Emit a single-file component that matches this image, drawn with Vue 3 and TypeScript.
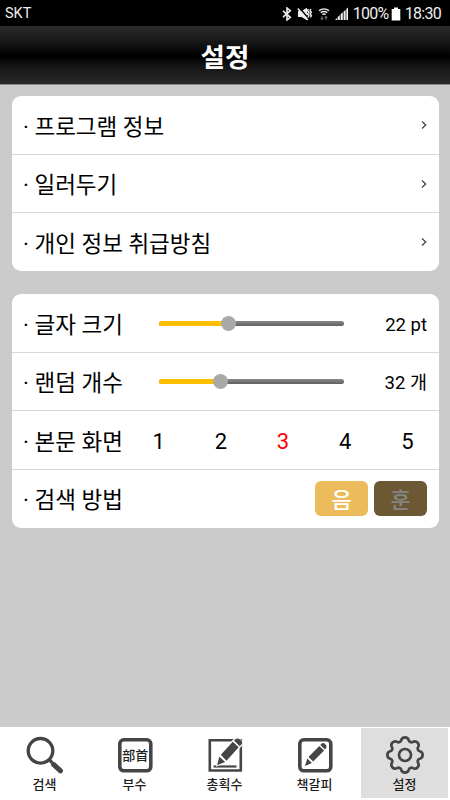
<script setup lang="ts">
import { ref } from 'vue'

interface Slider {
  label: string
  percent: number
  value: string
}

const links: string[] = ['프로그램 정보', '일러두기', '개인 정보 취급방침']
const sliders: Slider[] = [
  { label: '글자 크기', percent: 37.4, value: '22 pt' },
  { label: '랜덤 개수', percent: 33.4, value: '32 개' },
]
const screens: number[] = [1, 2, 3, 4, 5]
const selectedScreen = ref(3)
const tabs: string[] = ['검색', '부수', '총획수', '책갈피', '설정']
const activeTab = ref('설정')

// Eight rounded lobes joined by small concave notches.
function gearOutline(): string {
  const point = (radius: number, degrees: number): string => {
    const a = ((degrees - 90) * Math.PI) / 180
    return `${(20 + radius * Math.cos(a)).toFixed(2)} ${(20 + radius * Math.sin(a)).toFixed(2)}`
  }
  let d = `M${point(15.3, -14)}`
  for (let i = 0; i < 8; i++) {
    const c = i * 45
    d += `A3.85 3.85 0 0 1 ${point(15.3, c + 14)}`
    d += `A2.8 2.8 0 0 0 ${point(15.3, c + 31)}`
  }
  return d + 'Z'
}
const gearPath = gearOutline()
</script>

<template>
  <div class="screen">
    <div class="status">
      <span class="carrier">SKT</span>
      <div class="status-right">
        <svg class="bt" width="10" height="14" viewBox="0 0 10 14"><path d="M1 3.8 8.3 10.3 5 13V1l3.3 2.7L1 10.2" /></svg>
        <svg class="mute" width="16" height="14" viewBox="0 0 16 14">
          <path class="fill" d="M1 4h3.500L10 .8v12.400L4.500 10H1z" />
          <path class="cut" d="M2.200 .6 12 12" />
          <path d="M.8 1.500 10.800 13M11.500 2l-1 1.600 1.400 1.700-1.400 1.700 1.400 1.700-1 1.800M14 2l-1 1.600 1.400 1.700L13 7l1.400 1.700L13.400 10.500" />
        </svg>
        <svg class="wifi" width="12" height="14" viewBox="0 0 12 14">
          <path d="M1 3.600Q6 .2 11 3.600M2.700 5.600Q6 3.400 9.300 5.600M4.300 7.500Q6 6.400 7.700 7.500" />
          <path class="dim" d="M4 9v3.500M2.700 11.200 4 12.700l1.300-1.500M8 13V9.500M6.700 10.800 8 9.300l1.300 1.500" />
        </svg>
        <svg class="signal" width="15" height="14" viewBox="0 0 15 14"><path d="M1 13h2v-2zM3.600 13h2.200V8L3.600 10.200zM6.600 13h2.200V5.200L6.600 7.200zM9.600 13h2V2.900L9.600 4.600zM12.300 13H14V.5l-1.700 1.400z" /></svg>
        <span class="battery-text">100%</span>
        <svg class="battery" width="10" height="14" viewBox="0 0 10 14"><path d="M3 .5h4V2h2.300v11.500H.7V2H3z" /></svg>
        <span class="clock">18:30</span>
      </div>
    </div>

    <header class="header"><h1>설정</h1></header>

    <main class="content">
      <section class="card">
        <div v-for="link in links" :key="link" class="row">
          <span class="label">· {{ link }}</span>
          <svg class="chevron" width="6" height="10" viewBox="0 0 6 10"><path d="M1 1.500 4.700 5 1 8.500" /></svg>
        </div>
      </section>

      <section class="card">
        <div v-for="s in sliders" :key="s.label" class="row">
          <span class="label fixed">· {{ s.label }}</span>
          <div class="track">
            <div class="filled" :style="{ width: s.percent + '%' }"></div>
            <div class="thumb" :style="{ left: s.percent + '%' }"></div>
          </div>
          <span class="value">{{ s.value }}</span>
        </div>
        <div class="row">
          <span class="label fixed">· 본문 화면</span>
          <div class="numbers">
            <span v-for="n in screens" :key="n" :class="{ selected: n === selectedScreen }" @click="selectedScreen = n">{{ n }}</span>
          </div>
        </div>
        <div class="row">
          <span class="label">· 검색 방법</span>
          <div class="toggles">
            <button class="toggle on">음</button>
            <button class="toggle off">훈</button>
          </div>
        </div>
      </section>
    </main>

    <nav class="tabs">
      <div v-for="(tab, i) in tabs" :key="tab" class="tab" :class="{ active: tab === activeTab }" @click="activeTab = tab">
        <svg class="icon" width="40" height="40" viewBox="0 0 40 40">
          <g v-if="i === 0">
            <circle class="line" cx="15.500" cy="15.800" r="12.300" />
            <path class="line" d="m24 24.500 3 3" />
            <path class="handle" d="m28.500 29.300 7 6.500" />
          </g>
          <g v-else-if="i === 1">
            <rect class="line frame" x="4.800" y="4.800" width="31" height="31" rx="4" />
            <text x="20.300" y="25" text-anchor="middle">部首</text>
          </g>
          <g v-else-if="i === 2">
            <path class="line sharp" d="M4.800 5.300H35.800V35.500H4.800z" />
            <path class="handle thin" d="M8.500 31.500H31.500" />
            <path class="halo" d="m14 22.500 15-17.500q3.500-2.500 6 0t1 5.500L21 26.500l-8.500 3.500z" />
            <path class="solid" d="m14.300 21.500 5.800 5.500-8 3.300zM15.800 19.800 27.800 6.800l5.900 5.500L21.500 25.700zM29 5.600l1.700-1.600q2-1.500 4.700.8t1.200 4.400L34.800 11.200z" />
          </g>
          <g v-else-if="i === 3">
            <rect class="line frame" x="4.800" y="4.800" width="31" height="31" rx="4" />
            <path class="solid" d="m12.300 23.500 4.600 4.400-6.900 3.100zM13.500 22 24.300 10.900l4.800 4.600-10.900 11zM25.300 9.900l1.500-1.400q1.500-1.200 3.500.7t.8 3.500l-1.100 1.700z" />
          </g>
          <g v-else>
            <path class="line gear" :d="gearPath" />
            <circle class="line gear" cx="20" cy="20" r="6" />
          </g>
        </svg>
        <span class="tab-label">{{ tab }}</span>
      </div>
    </nav>
  </div>
</template>

<style>
body {
  margin: 0;
}
</style>

<style scoped>
.screen {
  width: 450px;
  height: 800px;
  display: flex;
  flex-direction: column;
  background: #cbcbcb;
  color: #000;
  font-family: Roboto, "Noto Sans CJK KR", sans-serif;
  overflow: hidden;
}
.status {
  height: 26px;
  flex: none;
  box-sizing: border-box;
  padding: 1px 9px 0 5px;
  display: flex;
  justify-content: space-between;
  align-items: center;
  background: #000;
  color: #eee;
  font-size: 14.500px;
}
.status-right {
  display: flex;
  align-items: center;
  font-size: 16px;
}
.status svg {
  fill: none;
  stroke: #eee;
  stroke-width: 1.4;
}
.status .bt {
  stroke-width: 1.6;
}
.status .mute {
  margin-left: 5px;
}
.status .mute .fill {
  fill: #eee;
  stroke: none;
}
.status .mute .cut {
  stroke: #000;
  stroke-width: 1.500;
}
.status .wifi {
  margin-left: 5px;
}
.status .wifi .dim {
  stroke: #666;
  stroke-width: 1.2;
}
.status .signal {
  margin-left: 4px;
  fill: #eee;
  stroke: none;
}
.battery-text {
  width: 37px;
  margin-left: 4px;
  letter-spacing: -0.700px;
  white-space: nowrap;
}
.status .battery {
  margin-left: 1px;
  margin-right: 1px;
  fill: #fff;
  stroke: none;
}
.clock {
  margin-left: 3px;
  letter-spacing: -0.700px;
}
.header {
  height: 59px;
  flex: none;
  box-sizing: border-box;
  border-bottom: 1px solid #888;
  display: flex;
  align-items: center;
  justify-content: center;
  background: linear-gradient(#2d2d2d 0%, #161616 28%, #000 52%, #151515 70%, #2a2a2a 100%);
}
h1 {
  margin: 0;
  padding-top: 5px;
  color: #fff;
  font-size: 26.500px;
  line-height: 38px;
  font-weight: 700;
}
.content {
  flex: 1;
  padding: 11.300px 11.500px 0;
  display: flex;
  flex-direction: column;
  gap: 23px;
}
.card {
  background: #fff;
  border-radius: 9px;
}
.row {
  height: 58.400px;
  box-sizing: border-box;
  padding: 0 11.500px;
  display: flex;
  align-items: center;
  border-bottom: 1px solid #d8d8d8;
}
.row:first-child {
  height: 58.600px;
}
.row:last-child {
  height: 58.100px;
  border-bottom: 0;
}
.label {
  flex: 1;
  padding-top: 3px;
  font-size: 22.500px;
  line-height: 32px;
  white-space: pre;
}
.label.fixed {
  flex: none;
  width: 136px;
}
.chevron {
  fill: none;
  stroke: #444;
  stroke-width: 1.300;
}
.track {
  position: relative;
  width: 185px;
  height: 5px;
  border-radius: 3px;
  background: linear-gradient(#888, #606060);
}
.filled {
  height: 5px;
  border-radius: 3px 0 0 3px;
  background: #ffbf00;
}
.thumb {
  position: absolute;
  top: -5px;
  width: 15px;
  height: 15px;
  margin-left: -7.500px;
  border-radius: 50%;
  background: #a9a9a9;
}
.value {
  flex: 1;
  padding-top: 3px;
  text-align: right;
  font-size: 18.500px;
  line-height: 28px;
  white-space: nowrap;
}
.numbers {
  flex: 1;
  display: flex;
  justify-content: space-between;
  margin-left: -6.500px;
  padding: 2px 13.500px 0 0;
  font-size: 22px;
}
.selected {
  color: #f00;
}
.toggles {
  display: flex;
  gap: 6px;
}
.toggle {
  width: 53px;
  height: 35px;
  padding: 4px 0 0;
  border: 0;
  border-radius: 6px;
  font-family: inherit;
  font-size: 22px;
  font-weight: 500;
  line-height: 31px;
}
.on {
  background: #ebbb5c;
  color: #fff;
}
.off {
  background: #6c5934;
  color: #858585;
}
.tabs {
  height: 73px;
  flex: none;
  display: grid;
  grid-template-columns: repeat(5, 1fr);
  background: #fff;
}
.tab {
  margin: 1px 2px 2px 1px;
  display: flex;
  flex-direction: column;
  align-items: center;
  padding-top: 7px;
}
.tab.active {
  background: #dedede;
}
.icon {
  display: block;
}
.line {
  fill: none;
  stroke: #454545;
  stroke-width: 3.300;
}
.frame {
  stroke-width: 3.600;
}
.sharp {
  stroke-width: 2.600;
}
.gear {
  stroke-width: 2.700;
}
.handle {
  stroke: #454545;
  stroke-width: 5;
  stroke-linecap: round;
}
.thin {
  stroke-width: 2.200;
  stroke-linecap: butt;
}
.halo {
  fill: #fff;
  stroke: #fff;
  stroke-width: 2;
}
.solid {
  fill: #454545;
}
.icon text {
  fill: #222;
  font-size: 13px;
  font-weight: 500;
  font-family: "Noto Sans CJK KR", sans-serif;
}
.tab-label {
  font-size: 13px;
  line-height: 19px;
  font-weight: 500;
  color: #1c1c1c;
}
</style>
